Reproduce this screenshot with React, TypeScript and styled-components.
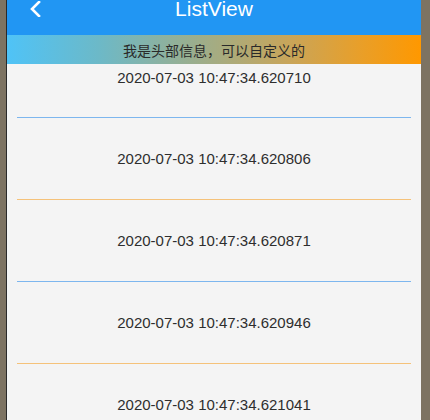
import React from "react";
import styled, { createGlobalStyle } from "styled-components";

const Global = createGlobalStyle`
  html, body { margin: 0; padding: 0; }
  body {
    width: 430px;
    height: 420px;
    overflow: hidden;
    background: #7d7362;
    font-family: "Liberation Sans", "Noto Sans CJK SC", Arial, sans-serif;
  }
`;

const Frame = styled.div`
  display: flex;
  width: 430px;
  height: 420px;
  padding: 0 9px 0 6px;
  box-sizing: border-box;
`;

const Screen = styled.div`
  flex: 1;
  display: flex;
  flex-direction: column;
  background: #f4f4f4;
  border-left: 1px solid #2a2a2a;
  overflow: hidden;
`;

const AppBar = styled.div`
  height: 35px;
  flex: none;
  background: #2196f3;
  display: grid;
  grid-template-columns: 40px 1fr 40px;
  align-items: start;
  color: #fff;
`;

const Back = styled.div`
  padding: 1px 0 0 21px;
  display: flex;
`;

const Title = styled.div`
  text-align: center;
  font-size: 21px;
  line-height: 22px;
  margin-top: -2px;
`;

const Header = styled.div`
  height: 29px;
  flex: none;
  background: linear-gradient(90deg, #4fc3f7 0%, #6cb9c8 22%, #9aae8e 45%, #c8a55a 68%, #e89f2a 85%, #ff9800 100%);
  display: flex;
  align-items: center;
  justify-content: center;
  font-family: "Noto Sans CJK SC", sans-serif;
  font-size: 14px;
  color: #2a2a2a;
  padding-top: 1px;
  box-sizing: border-box;
`;

const List = styled.div`
  display: flex;
  flex-direction: column;
  padding: 0 10px;
`;

const Item = styled.div<{ $first?: boolean; $line: string }>`
  display: flex;
  align-items: center;
  justify-content: center;
  flex: none;
  height: ${(p) => (p.$first ? "54px" : "82px")};
  padding-bottom: ${(p) => (p.$first ? "27px" : "0")};
  box-sizing: border-box;
  border-bottom: 1px solid ${(p) => p.$line};
  font-size: 15px;
  color: #2e2e2e;
`;

const items = [
  "2020-07-03 10:47:34.620710",
  "2020-07-03 10:47:34.620806",
  "2020-07-03 10:47:34.620871",
  "2020-07-03 10:47:34.620946",
  "2020-07-03 10:47:34.621041",
];

export default function App() {
  return (
    <>
      <Global />
      <Frame>
        <Screen>
          <AppBar>
            <Back>
              <svg width="14" height="16" viewBox="0 0 14 16">
                <path d="M11 1 L4 8 L11 15" fill="none" stroke="#fff" strokeWidth="2.6" strokeLinecap="square" />
              </svg>
            </Back>
            <Title>ListView</Title>
            <div />
          </AppBar>
          <Header>我是头部信息，可以自定义的</Header>
          <List>
            {items.map((t, i) => (
              <Item key={t} $first={i === 0} $line={i % 2 === 0 ? "#7db6ee" : "#f5c27a"}>
                {t}
              </Item>
            ))}
          </List>
        </Screen>
      </Frame>
    </>
  );
}
